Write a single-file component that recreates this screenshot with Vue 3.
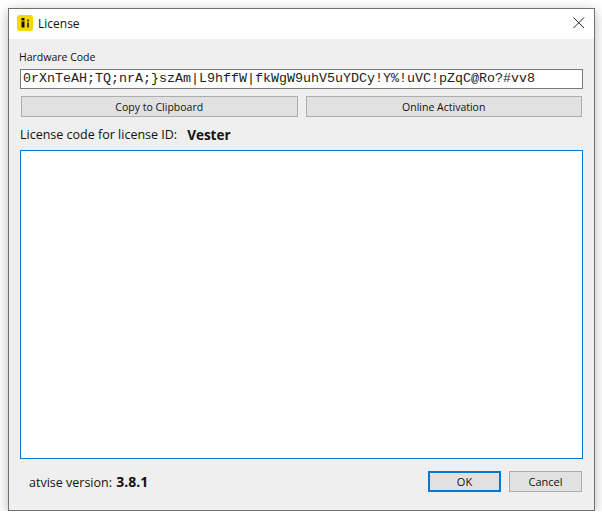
<template>
  <div class="window">
    <div class="titlebar">
      <svg class="logo" width="16" height="16" viewBox="0 0 16 16">
        <rect width="16" height="16" rx="2.5" fill="#f5d800" />
        <rect x="4.5" y="3" width="3" height="2.5" fill="#111" />
        <rect x="4.5" y="6.5" width="3" height="6" fill="#111" />
        <rect x="10" y="4.5" width="2" height="2" fill="#4a4300" />
        <rect x="10" y="7.5" width="2" height="5" fill="#4a4300" />
      </svg>
      <span class="title">License</span>
      <svg class="close" width="12" height="12" viewBox="0 0 12 12">
        <path d="M0.5 0.5 L11 11 M11 0.5 L0.5 11" stroke="#222" stroke-width="1" fill="none" />
      </svg>
    </div>
    <div class="content">
      <div class="label">Hardware Code</div>
      <div class="code">{{ hardwareCode }}</div>
      <div class="actions">
        <button class="btn">Copy to Clipboard</button>
        <button class="btn">Online Activation</button>
      </div>
      <div class="license-line">
        <span>License code for license ID:</span>
        <b class="license-id">Vester</b>
      </div>
      <textarea class="license-input"></textarea>
      <div class="footer">
        <div class="version">atvise version: <b>3.8.1</b></div>
        <div class="footer-buttons">
          <button class="btn small primary">OK</button>
          <button class="btn small">Cancel</button>
        </div>
      </div>
    </div>
  </div>
</template>

<script setup>
const hardwareCode = "0rXnTeAH;TQ;nrA;}szAm|L9hffW|fkWgW9uhV5uYDCy!Y%!uVC!pZqC@Ro?#vv8";
</script>

<style scoped>
.window {
  box-sizing: border-box;
  width: 587px;
  height: 503px;
  margin: 8px 0 0 8px;
  border: 1px solid #6f6f6f;
  background: #efefef;
  box-shadow: 0 3px 12px rgba(0, 0, 0, 0.28);
  display: flex;
  flex-direction: column;
  font-family: "Open Sans", "Noto Sans", sans-serif;
  font-size: 12.5px;
  color: #111;
}

.titlebar {
  height: 30px;
  flex: none;
  background: #fff;
  display: flex;
  align-items: center;
  padding: 0 9px 2px 8px;
  box-sizing: border-box;
}

.title {
  margin-left: 5px;
  font-size: 12px;
}

.close {
  margin-left: auto;
}

.content {
  flex: 1;
  display: flex;
  flex-direction: column;
  padding: 10px 11px 18px 10px;
}

.label {
  font-size: 10.5px;
  line-height: 16px;
  margin-bottom: 4px;
}

.code {
  box-sizing: border-box;
  height: 20px;
  margin-left: 1px;
  border: 1px solid #7a7a7a;
  background: #fff;
  font-family: "Liberation Mono", monospace;
  font-size: 13.33px;
  line-height: 18px;
  padding-left: 2px;
  white-space: nowrap;
  color: #222;
}

.actions {
  display: flex;
  gap: 8px;
  margin: 7px 1px 0 2px;
}

.actions .btn {
  flex: 1;
}

.btn {
  box-sizing: border-box;
  height: 21px;
  padding: 0;
  border: 1px solid #adadad;
  background: #e1e1e1;
  font-family: inherit;
  font-size: 10.5px;
  color: #111;
}

.btn.small {
  width: 73px;
  font-size: 11px;
}

.btn.primary {
  border: 2px solid #0078d7;
}

.license-line {
  display: flex;
  gap: 10px;
  margin: 9px 0 0 1px;
  line-height: 18px;
}

.license-id {
  font-size: 13.5px;
}

.license-input {
  box-sizing: border-box;
  flex: 1;
  margin: 6px 0 0 1px;
  border: 1px solid #0078d7;
  background: #fff;
  outline: none;
  resize: none;
  display: block;
}

.footer {
  display: flex;
  align-items: center;
  justify-content: space-between;
  margin-top: 12px;
  padding: 0 1px 0 10px;
}

.footer-buttons {
  display: flex;
  gap: 8px;
}

.version b {
  font-size: 14px;
  margin-left: 1px;
}
</style>

<style>
html, body {
  background: #fff;
  overflow: hidden;
}
</style>
